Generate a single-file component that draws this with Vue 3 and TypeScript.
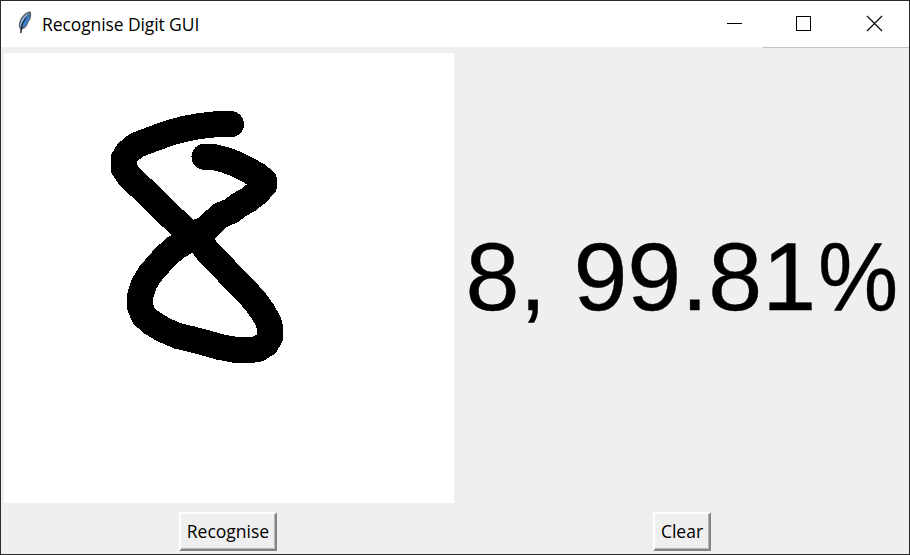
<script setup lang="ts">
import { ref } from 'vue'

type Point = [number, number]

const title = 'Recognise Digit GUI'
const drawing: Point[] = [
  [231, 124.2], [216, 124.2], [200, 126], [184, 129], [171, 132.5], [158, 137], [146, 141.5],
  [136, 145.5], [128, 152], [123.5, 159], [123.5, 168], [129, 176], [137, 184], [145, 191],
  [153, 199], [161, 207], [169, 215], [177, 222], [185, 230], [192, 236], [202, 244],
  [208, 252], [215, 259], [223, 267], [231, 276], [239, 284], [247, 292], [255, 301],
  [263, 312], [268, 321], [270.3, 328], [270.3, 337], [266, 344], [258, 349], [248, 350.3],
  [236, 350], [220, 347], [206, 343], [193, 339.5], [178, 336], [164, 330], [152, 323],
  [144, 316], [140, 307], [140, 296], [144, 284], [150, 274], [157, 266], [165, 257],
  [175, 248], [185, 242], [193, 234], [206, 229], [213, 222], [221, 215], [231, 211],
  [239, 205], [248, 200], [257, 193], [264.3, 185], [264.3, 181], [257, 175], [247, 169.5],
  [235, 163.5], [224, 159.5], [213, 157], [204.5, 156.8],
]
const strokes = ref<Point[][]>([drawing])
const value = ref('8, 99.81')

function recognise(): void {
  if (strokes.value.length) value.value = '8, 99.81'
}

function clearCanvas(): void {
  strokes.value = []
}
</script>

<template>
  <div class="window">
    <header class="titlebar">
      <svg class="feather" width="18" height="26" viewBox="0 0 18 26">
        <path d="M14.2 1.2 C9 2 4.6 7 3.2 12.5 C2.5 15.5 3 18 4.2 19.3 L4.8 24 L6 19.6 C9 18.6 11.3 16.3 12.3 12.5 L14.4 9 C15.5 6 15.6 3 14.2 1.2 Z" fill="#5d6066" />
        <path d="M12.8 2.6 C8.6 5 5.2 9.5 4.1 14 L4 17.4 L7.4 11 Z" fill="#86b4e8" />
        <path d="M13.8 3.2 L8 11 L5.8 18.2 C9 17 11 14.4 11.6 11.8 L13.4 8.5 Z" fill="#3c7fce" />
        <path d="M10 7.5 L6.4 13.5 L4.8 23" fill="none" stroke="#1c2028" stroke-width="1.1" />
      </svg>
      <span class="title">{{ title }}</span>
      <div class="controls">
        <svg width="70" height="46" viewBox="0 0 70 46" shape-rendering="crispEdges">
          <path d="M18 22.5 H33" stroke="#000" />
        </svg>
        <svg width="70" height="46" viewBox="0 0 70 46" shape-rendering="crispEdges">
          <rect x="17.5" y="15.5" width="14" height="14" fill="none" stroke="#000" />
        </svg>
        <svg width="60" height="46" viewBox="0 0 60 46">
          <path d="M18 15 L33 30 M33 15 L18 30" stroke="#000" stroke-width="1.1" />
        </svg>
      </div>
    </header>
    <main class="content">
      <svg class="canvas" width="450" height="450" viewBox="4 53 450 450">
        <polyline v-for="(s, i) in strokes" :key="i" :points="s.join(' ')" class="stroke" />
      </svg>
      <div class="result">{{ value }}<span class="percent">%</span></div>
      <div class="cell"><button class="recognise" @click="recognise">Recognise</button></div>
      <div class="cell right"><button class="clear" @click="clearCanvas">Clear</button></div>
    </main>
  </div>
</template>

<style>
body {
  margin: 0;
  overflow: hidden;
}
</style>

<style scoped>
.window {
  box-sizing: border-box;
  width: 910px;
  height: 555px;
  border: 1px solid #2b2b2e;
  background: #efefef;
  display: flex;
  flex-direction: column;
  color: #000;
}
.titlebar {
  height: 46px;
  flex: none;
  background: #fff;
  display: flex;
  align-items: center;
}
.feather {
  margin: 0 0 3px 15px;
}
.title {
  margin-left: 8px;
  font: 17.5px/24px 'Open Sans', 'Noto Sans', sans-serif;
  letter-spacing: -0.1px;
  white-space: nowrap;
}
.controls {
  display: flex;
  margin-left: auto;
}
.content {
  flex: 1;
  display: grid;
  grid-template-columns: 454px 454px;
  grid-template-rows: 461px 46px;
  background: linear-gradient(#c3c3c3, #c3c3c3) 762px 0 / 146px 1px no-repeat;
}
.canvas {
  display: block;
  margin: 6px 0 0 3px;
  background: #fff;
}
.stroke {
  fill: none;
  stroke: #000;
  stroke-width: 26;
  stroke-linecap: round;
  stroke-linejoin: round;
  shape-rendering: crispEdges;
}
.result {
  align-self: center;
  justify-self: center;
  padding-left: 3px;
  padding-bottom: 2px;
  font: 97px/110px 'Liberation Sans', Arial, sans-serif;
  -webkit-text-stroke: 0.4px #000;
  white-space: nowrap;
}
.percent {
  display: inline-block;
  margin-left: -1px;
  transform: scaleX(0.93);
}
.cell {
  display: flex;
  justify-content: center;
  align-items: flex-start;
  padding-top: 4px;
}
button {
  box-sizing: border-box;
  height: 39px;
  padding: 0 0 1px;
  border: 2px solid;
  border-color: #fff #858585 #858585 #fff;
  border-radius: 0;
  background: #efefef;
  box-shadow: inset -1px -1px #b5b5b5;
  color: #000;
  font: 17.5px/32px 'Open Sans', 'Noto Sans', sans-serif;
  letter-spacing: 0;
}
.recognise {
  width: 98px;
}
.clear {
  width: 58px;
}
</style>
